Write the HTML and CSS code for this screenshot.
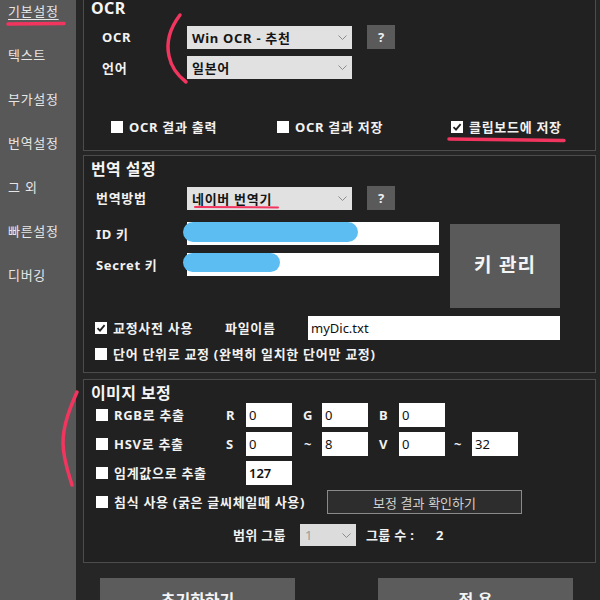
FILE: index.html
```html
<!DOCTYPE html>
<html lang="ko">
<head>
<meta charset="utf-8">
<link rel="stylesheet" href="styles.css">
</head>
<body>
<div class="app">
  <nav class="sidebar">
    <div class="nav-item active">기본설정</div>
    <div class="nav-item">텍스트</div>
    <div class="nav-item">부가설정</div>
    <div class="nav-item">번역설정</div>
    <div class="nav-item">그 외</div>
    <div class="nav-item">빠른설정</div>
    <div class="nav-item">디버깅</div>
  </nav>
  <main class="main">
    <section class="group group-ocr">
      <div class="group-title">OCR</div>
      <div class="ocr-rows">
        <div class="field-row">
          <span class="label label-ocr">OCR</span>
          <div class="select"><span>Win OCR - 추천</span><svg class="chev" width="9" height="5" viewBox="0 0 9 5"><polyline points="0.5,0.5 4.5,4.5 8.5,0.5"/></svg></div>
          <button class="help">?</button>
        </div>
        <div class="field-row">
          <span class="label label-ocr">언어</span>
          <div class="select"><span>일본어</span><svg class="chev" width="9" height="5" viewBox="0 0 9 5"><polyline points="0.5,0.5 4.5,4.5 8.5,0.5"/></svg></div>
        </div>
      </div>
      <div class="ocr-checks">
        <div class="check w-out"><span class="box"></span>OCR 결과 출력</div>
        <div class="check w-save"><span class="box"></span>OCR 결과 저장</div>
        <div class="check"><span class="box"><svg width="12" height="12" viewBox="0 0 12 12"><path d="M2.5 6.2 L5 8.6 L9.6 3.2"/></svg></span>클립보드에 저장</div>
      </div>
    </section>

    <section class="group group-trans">
      <div class="group-title">번역 설정</div>
      <div class="trans-top">
        <div class="field-row">
          <span class="label label-trans">번역방법</span>
          <div class="select select-normal"><span>네이버 번역기</span><svg class="chev" width="9" height="5" viewBox="0 0 9 5"><polyline points="0.5,0.5 4.5,4.5 8.5,0.5"/></svg></div>
          <button class="help">?</button>
        </div>
        <div class="keys">
          <div class="key-fields">
            <div class="field-row"><span class="label label-trans">ID 키</span><div class="input input-key"></div></div>
            <div class="field-row"><span class="label label-trans">Secret 키</span><div class="input input-key"></div></div>
          </div>
          <button class="key-btn">키 관리</button>
        </div>
      </div>
      <div class="dict-row">
        <div class="check dict-check"><span class="box"><svg width="12" height="12" viewBox="0 0 12 12"><path d="M2.5 6.2 L5 8.6 L9.6 3.2"/></svg></span>교정사전 사용</div>
        <span class="label file-label">파일이름</span>
        <div class="input input-file">myDic.txt</div>
      </div>
      <div class="check word-check"><span class="box"></span>단어 단위로 교정 (완벽히 일치한 단어만 교정)</div>
    </section>

    <section class="group group-img">
      <div class="group-title">이미지 보정</div>
      <div class="img-grid">
        <div class="check"><span class="box"></span>RGB로 추출</div>
        <span class="letter">R</span>
        <div class="input input-num">0</div>
        <span class="letter pad">G</span>
        <div class="input input-num">0</div>
        <span class="letter pad">B</span>
        <div class="input input-num">0</div>
        <span></span>
        <span></span>

        <div class="check"><span class="box"></span>HSV로 추출</div>
        <span class="letter">S</span>
        <div class="input input-num">0</div>
        <span class="letter tilde">~</span>
        <div class="input input-num">8</div>
        <span class="letter pad">V</span>
        <div class="input input-num">0</div>
        <span class="letter tilde2">~</span>
        <div class="input input-num">32</div>

        <div class="check"><span class="box"></span>임계값으로 추출</div>
        <span></span>
        <div class="input input-num bold">127</div>
      </div>
      <div class="erode-row">
        <div class="check erode-check"><span class="box"></span>침식 사용 (굵은 글씨체일때 사용)</div>
        <button class="verify">보정 결과 확인하기</button>
      </div>
      <div class="range-row">
        <span class="label range-label">범위 그룹</span>
        <div class="select select-disabled"><span>1</span><svg class="chev" width="9" height="5" viewBox="0 0 9 5"><polyline points="0.5,0.5 4.5,4.5 8.5,0.5"/></svg></div>
        <span class="label count-label">그룹 수 :</span>
        <span class="label">2</span>
      </div>
    </section>

    <div class="actions">
      <button class="action">초기화하기</button>
      <button class="action">적 용</button>
    </div>
  </main>
</div>

<svg class="marks" width="600" height="600" viewBox="0 0 600 600">
  <rect class="blob" x="183" y="222" width="175" height="20" rx="10"/>
  <rect class="blob" x="183" y="253" width="97" height="19" rx="9.5"/>
  <path class="pen" d="M8 24 L64 23.5"/>
  <path class="pen" d="M180 15 C170 28 166 42 169 56 C171 66 177 75 186 82"/>
  <path class="pen" d="M449 139 L564 140.5"/>
  <path class="pen thin" d="M195 207 L278 207.5"/>
  <path class="pen" d="M77 392 C70 408 63 425 63 443 C63 458 68 472 72 485"/>
</svg>
</body>
</html>
```

FILE: styles.css
```css
html, body {
  margin: 0;
  padding: 0;
}

body {
  width: 600px;
  height: 600px;
  overflow: hidden;
  background: #262626;
  font-family: "Noto Sans", "Noto Sans CJK KR", sans-serif;
  font-size: 13px;
  color: #f2f2f2;
  position: relative;
}

.app {
  display: flex;
  height: 600px;
  overflow: hidden;
}

.sidebar {
  width: 76px;
  flex: none;
  box-sizing: border-box;
  background: #585858;
  padding: 1px 0 0 8px;
  display: flex;
  flex-direction: column;
  gap: 24px;
}

.nav-item {
  font-family: "Noto Sans CJK KR", sans-serif;
  font-size: 13px;
  line-height: 20px;
  letter-spacing: 0.7px;
  color: #e6e6e6;
}

.nav-item.active {
  text-decoration: underline;
  text-underline-offset: 3px;
  text-decoration-thickness: 1px;
}

.main {
  flex: 1;
  min-width: 0;
  padding: 0 4px 0 7px;
  display: flex;
  flex-direction: column;
  background: #262626;
}

.group {
  border: 1px solid #4c4c4c;
  background: #212121;
  padding: 3px 0 0 0;
}

.group-title {
  font-size: 16px;
  line-height: 20px;
  font-weight: 700;
  letter-spacing: 0.4px;
  color: #f5f5f5;
  padding-left: 7px;
}

.group-ocr {
  margin-top: -6px;
  padding-bottom: 13px;
}

.group-ocr .ocr-rows {
  margin-top: 7px;
}

.group-trans {
  margin-top: 4px;
  padding-bottom: 8px;
}

.group-img {
  margin-top: 6px;
  padding-bottom: 16px;
}

.label {
  font-weight: 700;
  font-size: 13px;
  line-height: 20px;
  letter-spacing: 0.7px;
  color: #f2f2f2;
  flex: none;
}

.field-row {
  display: flex;
  align-items: center;
}

/* OCR */
.ocr-rows {
  padding-left: 18px;
  display: flex;
  flex-direction: column;
  gap: 7px;
}

.label-ocr {
  width: 85px;
}

.select {
  width: 165px;
  height: 23px;
  box-sizing: border-box;
  background: #e1e1e1;
  display: flex;
  align-items: center;
  justify-content: space-between;
  padding: 0 5px 0 5px;
  font-weight: 700;
  font-size: 13px;
  letter-spacing: 0.7px;
  color: #151515;
  flex: none;
}

.select-normal {
  font-weight: 600;
}

.chev polyline {
  fill: none;
  stroke: #8c8c8c;
  stroke-width: 1;
}

.help {
  margin-left: 15px;
  width: 28px;
  height: 24px;
  border: none;
  background: #5a5a5a;
  color: #f0f0f0;
  font-family: inherit;
  font-size: 13px;
  font-weight: 700;
  padding: 0;
  flex: none;
}

.ocr-checks {
  margin-top: 38px;
  padding-left: 27px;
  display: flex;
}

.check {
  display: flex;
  align-items: center;
  gap: 6px;
  font-weight: 700;
  font-size: 13px;
  line-height: 20px;
  letter-spacing: 0.7px;
  color: #f2f2f2;
  white-space: nowrap;
}

.box {
  width: 12px;
  height: 12px;
  background: #ffffff;
  flex: none;
  display: block;
}

.box svg {
  display: block;
}

.box path {
  fill: none;
  stroke: #222;
  stroke-width: 1.8;
}

.w-out {
  width: 166px;
}

.w-save {
  width: 174px;
}

/* translation */
.trans-top {
  margin-top: 7px;
  padding-left: 12px;
}

.label-trans {
  width: 91px;
}

.keys {
  margin-top: 12px;
  display: flex;
  align-items: flex-start;
}

.key-fields {
  display: flex;
  flex-direction: column;
  gap: 8px;
}

.input {
  background: #ffffff;
  box-sizing: border-box;
  color: #111;
  font-size: 13px;
  line-height: 20px;
  display: flex;
  align-items: center;
  padding-left: 3px;
  flex: none;
}

.input-key {
  width: 252px;
  height: 23px;
}

.key-btn {
  margin-left: 11px;
  margin-top: 2px;
  width: 110px;
  height: 84px;
  border: none;
  background: #5a5a5a;
  color: #f4f4f4;
  font-family: "Noto Sans CJK KR", sans-serif;
  font-size: 19px;
  line-height: 1;
  letter-spacing: 1px;
  font-weight: 700;
  padding: 0 0 5px 0;
}

.dict-row {
  margin-top: 8px;
  padding-left: 11px;
  display: flex;
  align-items: center;
  height: 24px;
}

.dict-check {
  width: 130px;
  flex: none;
}

.file-label {
  width: 83px;
}

.input-file {
  width: 252px;
  height: 24px;
}

.word-check {
  margin-top: 4px;
  padding-left: 11px;
}

/* image */
.img-grid {
  padding-left: 12px;
  display: grid;
  grid-template-columns: 130px 20px 46px 30px 46px 31px 45px 28px 46px;
  grid-template-rows: 24px 24px 24px;
  row-gap: 5px;
  align-items: center;
}

.letter {
  font-weight: 700;
  font-size: 13px;
  line-height: 20px;
  color: #f2f2f2;
}

.letter.pad {
  padding-left: 11px;
}

.letter.tilde {
  padding-left: 12px;
}

.letter.tilde2 {
  padding-left: 10px;
}

.input-num {
  width: 46px;
  height: 24px;
}

.input-num.bold {
  font-weight: 600;
}

.erode-row {
  margin-top: 5px;
  padding-left: 12px;
  display: flex;
  align-items: center;
  height: 24px;
}

.erode-check {
  width: 231px;
  flex: none;
}

.verify {
  width: 195px;
  height: 24px;
  box-sizing: border-box;
  border: 1px solid #8a8a8a;
  background: #2d2d2d;
  color: #d0d0d0;
  font-family: "Noto Sans CJK KR", sans-serif;
  font-size: 13px;
  padding: 0;
}

.range-row {
  margin-top: 10px;
  padding-left: 149px;
  display: flex;
  align-items: center;
  height: 22px;
}

.range-label {
  width: 67px;
  letter-spacing: 0.3px;
}

.select-disabled {
  width: 56px;
  height: 22px;
  background: #dcdcdc;
  color: #9a9a9a;
  font-weight: 400;
}

.count-label {
  margin-left: 10px;
  width: 70px;
  letter-spacing: 0.3px;
}

/* bottom actions */
.actions {
  margin-top: 15px;
  padding-left: 17px;
  display: flex;
  gap: 83px;
}

.action {
  width: 195px;
  height: 42px;
  flex: none;
  border: none;
  background: #5c5c5c;
  color: #f4f4f4;
  font-family: "Noto Sans CJK KR", sans-serif;
  font-size: 16px;
  font-weight: 700;
  padding: 0;
}

/* annotation overlay */
.marks {
  position: absolute;
  left: 0;
  top: 0;
  pointer-events: none;
}

.blob {
  fill: #5cbdf2;
}

.pen {
  fill: none;
  stroke: #f2355f;
  stroke-width: 3.5;
  stroke-linecap: round;
}

.pen.thin {
  stroke-width: 2;
}
```
